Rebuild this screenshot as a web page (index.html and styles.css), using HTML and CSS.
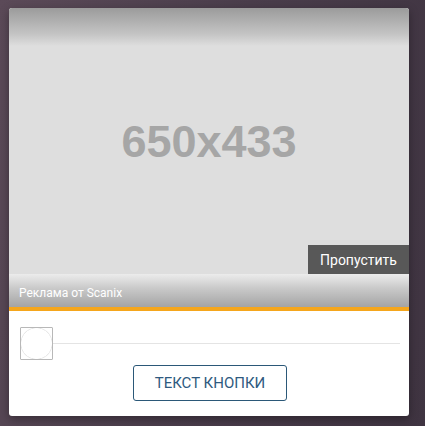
FILE: index.html
```html
<!DOCTYPE html>
<html lang="ru">
<head>
  <meta charset="UTF-8">
  <title>Реклама</title>
  <link rel="stylesheet" href="styles.css">
</head>
<body>
  <div class="card">
    <div class="media">
      <div class="placeholder">650x433</div>
      <button class="skip">Пропустить</button>
    </div>
    <div class="ad-bar">Реклама от Scanix</div>
    <div class="bottom">
      <div class="track">
        <span class="check"></span>
        <span class="rule"></span>
      </div>
      <button class="action">ТЕКСТ КНОПКИ</button>
    </div>
  </div>
</body>
</html>
```

FILE: styles.css
```css
* {
  box-sizing: border-box;
}

body {
  margin: 0;
  height: 426px;
  background: linear-gradient(100deg, #5b4a58 0%, #4a3d4b 50%, #3f3441 100%);
  font-family: Roboto, 'Noto Sans', sans-serif;
  overflow: hidden;
}

.card {
  margin: 8px 0 0 9px;
  width: 400px;
  height: 408px;
  background: #fff;
  border-radius: 3px;
  overflow: hidden;
  box-shadow: 0 3px 10px rgba(0, 0, 0, 0.35);
  display: flex;
  flex-direction: column;
}

.media {
  position: relative;
  height: 266px;
  background: linear-gradient(to bottom, #9b9b9b 0px, #c4c4c4 26px, #dedede 38px, #dedede 100%);
  display: flex;
  align-items: center;
  justify-content: center;
}

.placeholder {
  font-family: 'Liberation Sans', Arial, sans-serif;
  font-weight: bold;
  font-size: 45px;
  color: #a6a6a6;
  margin-top: 1px;
}

.skip {
  position: absolute;
  right: 0;
  bottom: 0;
  width: 101px;
  height: 29px;
  border: none;
  background: #585858;
  color: #fff;
  font-family: Roboto, sans-serif;
  font-size: 14px;
  padding: 0;
}

.ad-bar {
  height: 37px;
  padding: 12px 0 0 10px;
  background: linear-gradient(to bottom, #ececec 0%, #c8c8c8 45%, #a4a4a4 100%);
  border-bottom: 4px solid #f5a61c;
  color: #fff;
  font-size: 12px;
}

.bottom {
  flex: 1;
  padding: 16px 9px 0 11px;
  display: flex;
  flex-direction: column;
  align-items: center;
  gap: 5px;
}

.track {
  position: relative;
  width: 100%;
  height: 33px;
  display: flex;
  align-items: center;
}

.check {
  width: 33px;
  height: 33px;
  border: 1px solid #b8b8b8;
  border-radius: 1px;
  background: radial-gradient(circle, transparent 15px, #e6e6e6 15.5px, transparent 16.5px);
  flex-shrink: 0;
}

.rule {
  flex: 1;
  height: 1px;
  background: #e4e4e4;
}

.action {
  width: 154px;
  height: 36px;
  background: #fff;
  border: 1px solid #2b5878;
  border-radius: 3px;
  color: #2f5a80;
  font-family: Roboto, sans-serif;
  font-size: 15px;
  padding: 0;
}
```
